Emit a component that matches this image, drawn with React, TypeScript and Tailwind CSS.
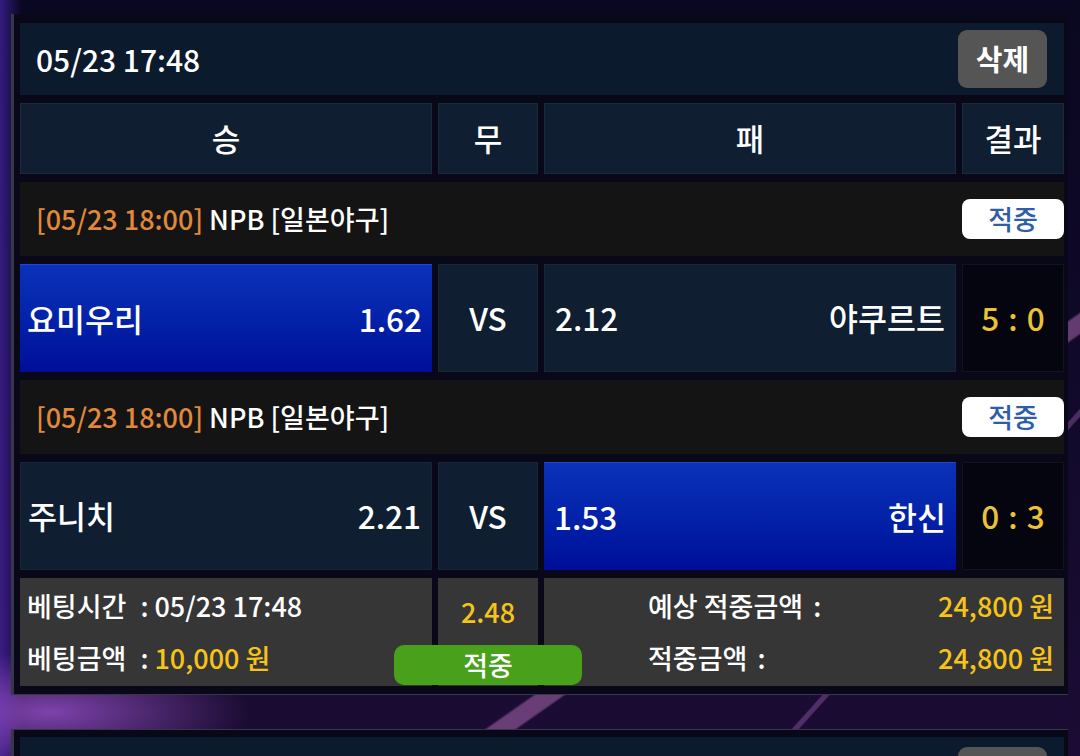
import React from "react";

type Match = {
  time: string;
  league: string;
  home: string;
  homeOdds: string;
  awayOdds: string;
  away: string;
  score: [string, string];
  pick: "home" | "away";
};

const matches: Match[] = [
  {
    time: "05/23 18:00",
    league: "NPB [일본야구]",
    home: "요미우리",
    homeOdds: "1.62",
    awayOdds: "2.12",
    away: "야쿠르트",
    score: ["5", "0"],
    pick: "home",
  },
  {
    time: "05/23 18:00",
    league: "NPB [일본야구]",
    home: "주니치",
    homeOdds: "2.21",
    awayOdds: "1.53",
    away: "한신",
    score: ["0", "3"],
    pick: "away",
  },
];

const picked = "bg-gradient-to-b from-[#0c32ba] to-[#000d98] border-t border-[#2446c8]";
const plain = "bg-[#0f1e30] border border-[#172739]";

const Colon = () => <span className="ml-[14px] mr-[6px]">:</span>;

const BetCard = ({ betTime }: { betTime: string }) => {
  return (
    <div className="ml-[11px] w-[1057px] border-l-[3px] border-b border-[#38364a] bg-[#080818] pl-[6px] pr-[4px] pt-[9px] pb-[8px]">
      <div className="grid grid-cols-[412px_100px_412px_102px] gap-x-[6px] gap-y-[8px]">
        {/* top bar */}
        <div className="col-span-4 h-[72px] bg-[#0b1a2d] flex items-center justify-between pl-[16px] pr-[17px]">
          <span className="text-[30px] text-white">{betTime}</span>
          <button className="w-[89px] h-[58px] rounded-[9px] bg-[#555555] text-[29px] text-white font-bold">
            삭제
          </button>
        </div>

        {/* column heads */}
        {["승", "무", "패", "결과"].map((h) => (
          <div
            key={h}
            className="h-[71px] bg-[#0f1e30] border border-[#1a2a3d] flex items-center justify-center text-[31px] text-white"
          >
            {h}
          </div>
        ))}

        {matches.map((m, i) => (
          <React.Fragment key={i}>
            <div className="col-span-4 h-[74px] bg-[#141414] flex items-center justify-between pl-[16px]">
              <span className="text-[27px]">
                <span className="text-[#e0893a]">[{m.time}]</span>{" "}
                <span className="text-white">{m.league}</span>
              </span>
              <span className="w-[102px] h-[40px] rounded-[8px] bg-white flex items-center justify-center text-[27px] text-[#2f5ea6]">
                적중
              </span>
            </div>
            <div
              className={`h-[108px] flex items-center justify-between pl-[7px] pr-[10px] text-[31.5px] text-white ${
                m.pick === "home" ? picked : plain
              }`}
            >
              <span>{m.home}</span>
              <span>{m.homeOdds}</span>
            </div>
            <div className="h-[108px] bg-[#0f1e30] border border-[#172739] flex items-center justify-center text-[31.5px] text-white">
              VS
            </div>
            <div
              className={`h-[108px] flex items-center justify-between pl-[10px] pr-[10px] text-[31.5px] text-white ${
                m.pick === "away" ? picked : plain
              }`}
            >
              <span>{m.awayOdds}</span>
              <span>{m.away}</span>
            </div>
            <div className="h-[108px] bg-[#05050f]/90 border border-[#131320] flex items-center justify-center gap-[9px] text-[31.5px] text-[#ebc236]">
              <span>{m.score[0]}</span>
              <span>:</span>
              <span>{m.score[1]}</span>
            </div>
          </React.Fragment>
        ))}

        {/* summary */}
        <div className="h-[108px] bg-[#363636] flex flex-col justify-center gap-[12px] pl-[7px] text-[27px] text-white">
          <div className="h-[40px] flex items-center">
            베팅시간
            <Colon />
            {betTime}
          </div>
          <div className="h-[40px] flex items-center">
            베팅금액
            <Colon />
            <span className="text-[#f6c419]">10,000 원</span>
          </div>
        </div>
        <div className="relative h-[108px] bg-[#363636] flex justify-center pt-[14px] text-[27px] text-[#f6c419]">
          <span className="h-[40px] leading-[40px]">2.48</span>
          <span className="absolute z-10 left-[-44px] bottom-[1px] w-[188px] h-[40px] rounded-[10px] bg-[#48a01b] flex items-center justify-center text-[27px] text-white">
            적중
          </span>
        </div>
        <div className="col-span-2 h-[108px] bg-[#363636] flex flex-col justify-center gap-[12px] pl-[104px] pr-[10px] text-[27px]">
          <div className="h-[40px] flex items-center justify-between">
            <span className="text-white">
              예상 적중금액<span className="ml-[10px]">:</span>
            </span>
            <span className="text-[#f6c419]">24,800 원</span>
          </div>
          <div className="h-[40px] flex items-center justify-between">
            <span className="text-white">
              적중금액<span className="ml-[10px]">:</span>
            </span>
            <span className="text-[#f6c419]">24,800 원</span>
          </div>
        </div>
      </div>
    </div>
  );
};

// next card in the list, only its top edge fits on screen
const NextCardTop = () => (
  <div className="ml-[11px] w-[1057px] border-l-[3px] border-t border-[#38364a] bg-[#080818] pl-[6px] pr-[4px] pt-[7px]">
    <div className="h-[72px] bg-[#0b1a2d] flex justify-end pt-[10px] pr-[17px]">
      <div className="w-[89px] h-[58px] rounded-[9px] bg-[#555555]" />
    </div>
  </div>
);

export default function App() {
  return (
    <div className="w-[1080px] h-[756px] overflow-hidden font-['Noto_Sans_CJK_KR','Noto_Sans',sans-serif] font-medium bg-[linear-gradient(145deg,transparent_70.6%,rgba(200,120,200,0.45)_70.8%,rgba(200,120,200,0.45)_72%,transparent_72.2%),linear-gradient(132deg,transparent_82.2%,rgba(180,110,200,0.35)_82.3%,rgba(180,110,200,0.35)_82.6%,transparent_82.7%),radial-gradient(ellipse_200px_60px_at_50px_712px,rgba(150,80,200,0.8),transparent),linear-gradient(90deg,rgba(80,40,190,0.6)_0px,transparent_22px),linear-gradient(180deg,#0a0720_0%,#120a2c_60%,#1c0c34_100%)] pt-[14px]">
      <BetCard betTime="05/23 17:48" />
      <div className="mt-[34px]">
        <NextCardTop />
      </div>
    </div>
  );
}
